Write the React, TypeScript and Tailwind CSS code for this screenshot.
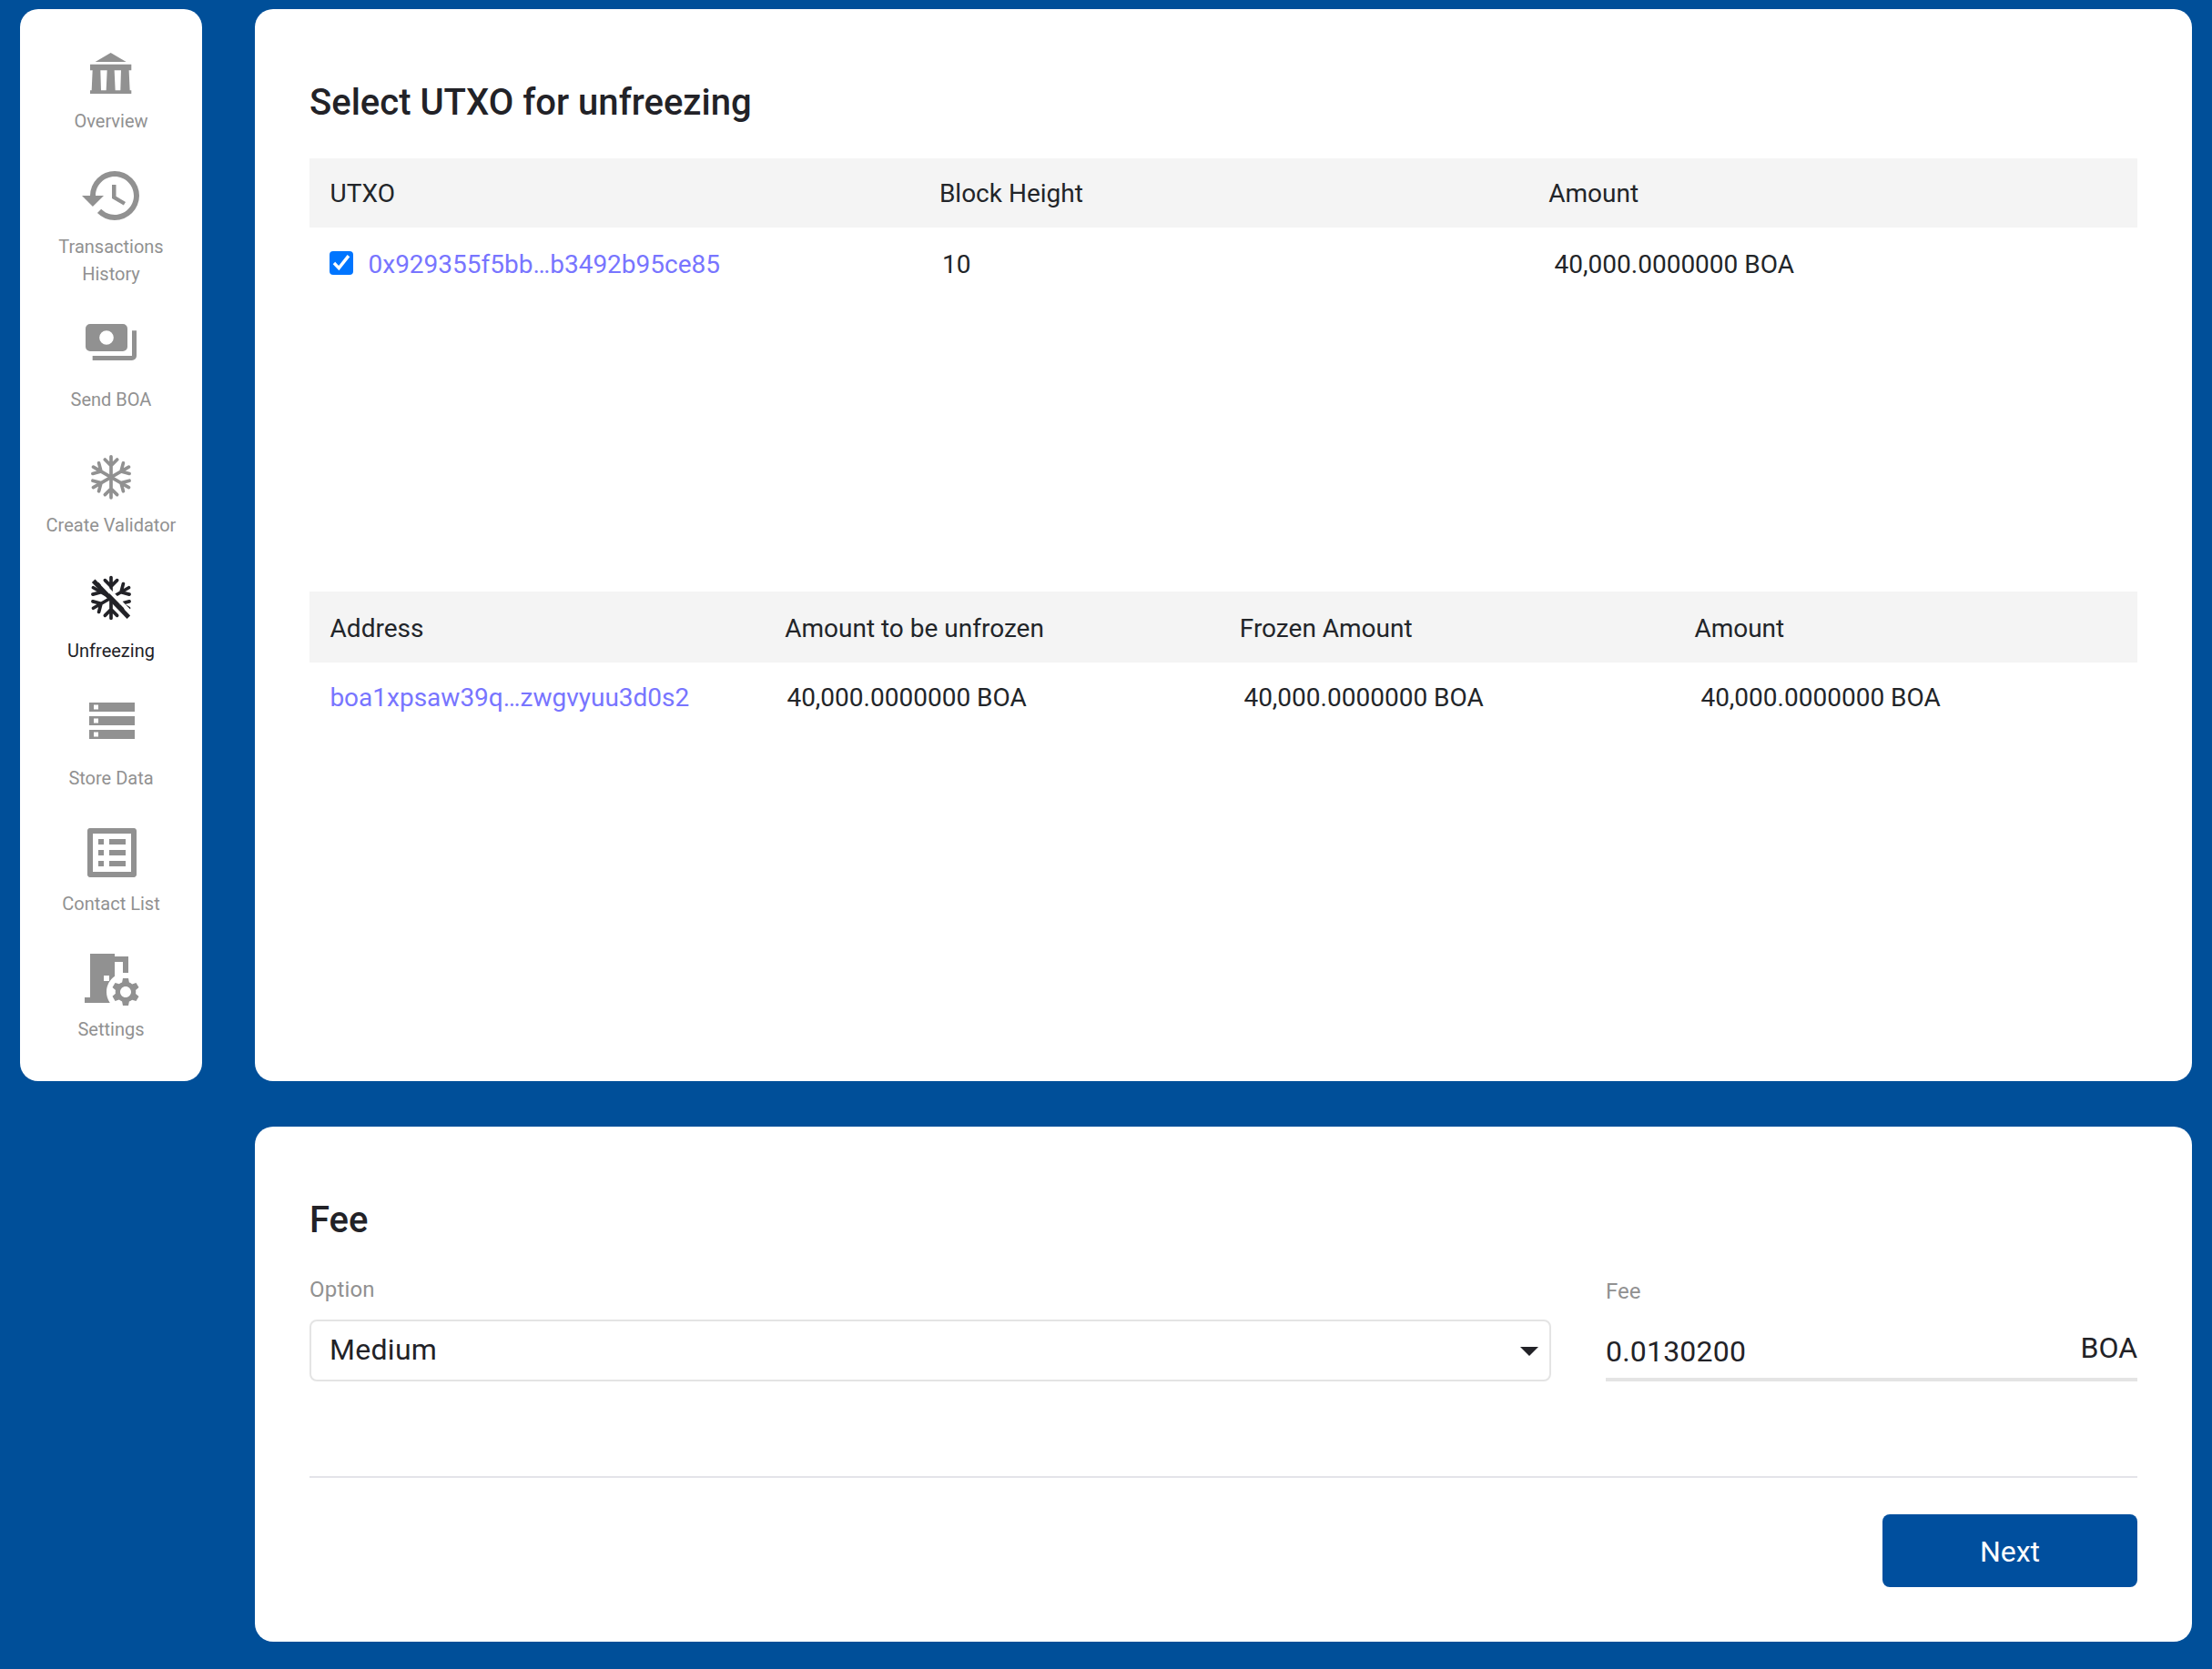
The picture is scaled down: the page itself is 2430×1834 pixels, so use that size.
import type { ReactNode } from "react";
import { MdHistory, MdListAlt, MdRoomPreferences, MdStorage } from "react-icons/md";

function BankIcon() {
  return (
    <svg viewBox="0 0 136 135" className="h-[45px] w-[45.3px]" fill="currentColor">
      <path d="M68 0L119 30H17z" />
      <path
        fillRule="evenodd"
        d="M0 38H136V58H128L131 124H136V135H0V124H5L8 58H0zM34 58L36 124H53L56 58zM80 58L83 124H100L102 58z"
      />
    </svg>
  );
}

function PaymentsIcon() {
  return (
    <svg viewBox="0 0 168 120" className="h-[40px] w-[56px]" fill="currentColor">
      <path
        fillRule="evenodd"
        d="M15 0H123A15 15 0 0 1 138 15V75A15 15 0 0 1 123 90H15A15 15 0 0 1 0 75V15A15 15 0 0 1 15 0zM69 21.5A23.5 23.5 0 1 0 69 68.5A23.5 23.5 0 1 0 69 21.5z"
      />
      <path d="M153 22H168V105A15 15 0 0 1 153 120H23V105H153z" />
    </svg>
  );
}

const arms = [0, 60, 120, 180, 240, 300];

function SnowArms() {
  return (
    <g fill="none" stroke="currentColor" strokeWidth="11" strokeLinecap="round">
      {arms.map((angle) => (
        <path key={angle} transform={`rotate(${angle})`} d="M0 0V-67.5M-20 -58L0 -38L20 -58" />
      ))}
    </g>
  );
}

function SnowIcon() {
  return (
    <svg viewBox="-66 -73 132 146" className="h-[48.67px] w-[44px]">
      <SnowArms />
    </svg>
  );
}

function SnowOffIcon() {
  return (
    <svg viewBox="-66 -75 132 150" className="h-[50px] w-[44px]">
      <SnowArms />
      <path d="M-50 -69L72 55" stroke="#fff" strokeWidth="12" />
      <path d="M-58 -56L58 64" stroke="currentColor" strokeWidth="15" />
    </svg>
  );
}

type NavItem = { lines: string[]; icon: ReactNode; slot: string; active?: boolean };

const nav: NavItem[] = [
  { lines: ["Overview"], icon: <BankIcon />, slot: "h-[108px] pt-[47.5px]" },
  {
    lines: ["Transactions", "History"],
    icon: <MdHistory className="size-[72px]" />,
    slot: "h-[108px] pt-[31px] pl-[2px]",
  },
  { lines: ["Send BOA"], icon: <PaymentsIcon />, slot: "h-[108px] pt-[40px]" },
  { lines: ["Create Validator"], icon: <SnowIcon />, slot: "h-[108px] pt-[46px]" },
  { lines: ["Unfreezing"], icon: <SnowOffIcon />, slot: "h-[108px] pt-[40px]", active: true },
  {
    lines: ["Store Data"],
    icon: <MdStorage className="size-[60px]" />,
    slot: "h-[110px] pt-[32px] pl-[2px]",
  },
  {
    lines: ["Contact List"],
    icon: <MdListAlt className="size-[72px]" />,
    slot: "h-[108px] pt-[31px] pl-[2px]",
  },
  {
    lines: ["Settings"],
    icon: <MdRoomPreferences className="size-[72px]" />,
    slot: "h-[108px] pt-[31px] pr-[5px]",
  },
];

function Sidebar() {
  return (
    <nav className="h-[1178px] w-[200px] shrink-0 rounded-[20px] bg-white">
      {nav.map((item) => (
        <div
          key={item.lines[0]}
          className={`flex flex-col items-center ${item.active ? "text-[#222227]" : "text-[#919191]"}`}
        >
          <div className={`box-border flex w-full items-start justify-center ${item.slot}`}>{item.icon}</div>
          {item.lines.map((line) => (
            <span key={line} className="text-[20px] leading-[30px]">
              {line}
            </span>
          ))}
        </div>
      ))}
    </nav>
  );
}

function Title({ children }: { children: ReactNode }) {
  return <h2 className="text-[40px] leading-[47px] font-medium text-[#222227]">{children}</h2>;
}

function Checkbox() {
  return (
    <span className="-mt-[3px] mr-[16.5px] flex size-[26px] shrink-0 rounded-[4px] bg-[#0075ff]">
      <svg viewBox="0 0 26 26" className="size-[26px]" fill="#fff">
        <path d="M3.7 14.2L6.2 11.8L10.1 16L19.6 4L22.3 6.3L10.4 21.3z" />
      </svg>
    </span>
  );
}

function UtxoTable() {
  return (
    <section className="mt-[38px] h-[476px] text-[28px] leading-[33px] text-[#222529]">
      <div className="flex h-[76px] items-center bg-[#f4f4f4] pt-px pl-[22.6px]">
        <div className="w-[669.3px]">UTXO</div>
        <div className="w-[669.3px]">Block Height</div>
        <div>Amount</div>
      </div>
      <div className="flex h-[81px] items-center pl-[22px]">
        <div className="flex w-[673px] items-center">
          <Checkbox />
          <span className="text-[#7875ff]">0x929355f5bb…b3492b95ce85</span>
        </div>
        <div className="w-[672.6px]">10</div>
        <div>40,000.0000000 BOA</div>
      </div>
    </section>
  );
}

function AddressTable() {
  return (
    <section className="text-[28px] leading-[33px] text-[#222529]">
      <div className="flex h-[78px] items-center bg-[#f4f4f4] pt-[3px] pl-[22.6px]">
        <div className="w-[499.6px]">Address</div>
        <div className="w-[499.6px]">Amount to be unfrozen</div>
        <div className="w-[499.6px]">Frozen Amount</div>
        <div>Amount</div>
      </div>
      <div className="flex h-[77px] items-center pl-[22.4px]">
        <div className="w-[502px] text-[#7875ff]">boa1xpsaw39q…zwgvyuu3d0s2</div>
        <div className="w-[502px]">40,000.0000000 BOA</div>
        <div className="w-[502px]">40,000.0000000 BOA</div>
        <div>40,000.0000000 BOA</div>
      </div>
    </section>
  );
}

function FeeCard() {
  return (
    <div className="h-[566px] rounded-[20px] bg-white px-[60px] pt-[79px]">
      <Title>Fee</Title>
      <div className="mt-[39px] flex gap-[60px]">
        <div className="w-[1364px]">
          <div className="mb-[19px] text-[24px] leading-[28px] tracking-[0.2px] text-[#919191]">Option</div>
          <div className="flex h-[68px] items-center justify-between rounded-[8px] border-2 border-[#e4e4e4] pr-[12px] pb-[2px] pl-[20px]">
            <span className="text-[32px] leading-[38px] tracking-[0.3px] text-[#222227]">Medium</span>
            <svg viewBox="0 0 20 10" className="mt-[4px] h-[10px] w-[20px]" fill="#222227">
              <path d="M0 0H20L10 10z" />
            </svg>
          </div>
        </div>
        <div className="w-[584px] pt-[2px]">
          <div className="mb-[17px] text-[24px] leading-[28px] text-[#919191]">Fee</div>
          <div className="flex h-[68px] items-start justify-between border-b-4 border-[#e4e4e4] text-[32px] leading-[38px] text-[#222227]">
            <span className="mt-[16px] tracking-[0.2px]">0.0130200</span>
            <span className="mt-[12px]">BOA</span>
          </div>
        </div>
      </div>
      <div className="mt-[104px] h-[2px] bg-[#e4e4e9]" />
      <div className="mt-[40px] flex justify-end">
        <button className="h-[80px] w-[280px] rounded-[8px] bg-[#004f9e] pt-[2px] text-[32px] leading-[38px] text-white">
          Next
        </button>
      </div>
    </div>
  );
}

export default function App() {
  return (
    <div className="flex h-[1834px] w-[2430px] items-start gap-[58px] bg-[#004f99] pt-[10px] pr-[22px] pl-[22px] font-[Roboto,sans-serif]">
      <Sidebar />
      <main className="flex w-[2128px] flex-col gap-[50px]">
        <div className="h-[1178px] rounded-[20px] bg-white px-[60px] pt-[79px]">
          <Title>Select UTXO for unfreezing</Title>
          <UtxoTable />
          <AddressTable />
        </div>
        <FeeCard />
      </main>
    </div>
  );
}
